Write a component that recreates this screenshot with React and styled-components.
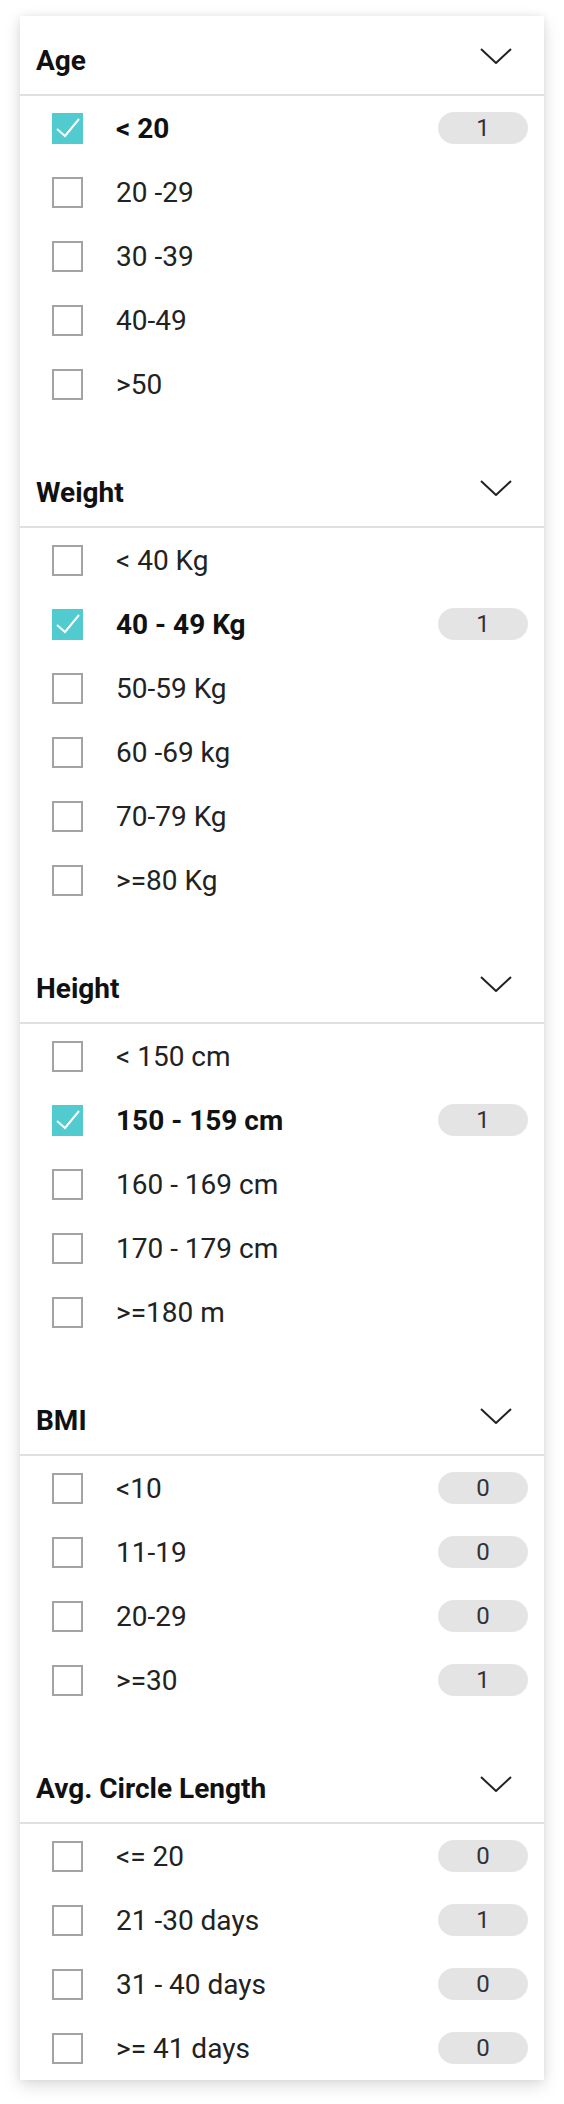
import React from 'react';
import styled, { createGlobalStyle } from 'styled-components';

const filters = [
  {
    title: 'Age',
    options: [
      { label: '< 20', checked: true, count: 1 },
      { label: '20 -29' },
      { label: '30 -39' },
      { label: '40-49' },
      { label: '>50' },
    ],
  },
  {
    title: 'Weight',
    options: [
      { label: '< 40 Kg' },
      { label: '40 - 49 Kg', checked: true, count: 1 },
      { label: '50-59 Kg' },
      { label: '60 -69 kg' },
      { label: '70-79 Kg' },
      { label: '>=80 Kg' },
    ],
  },
  {
    title: 'Height',
    options: [
      { label: '< 150 cm' },
      { label: '150 - 159 cm', checked: true, count: 1 },
      { label: '160 - 169 cm' },
      { label: '170 - 179 cm' },
      { label: '>=180 m' },
    ],
  },
  {
    title: 'BMI',
    options: [
      { label: '<10', count: 0 },
      { label: '11-19', count: 0 },
      { label: '20-29', count: 0 },
      { label: '>=30', count: 1 },
    ],
  },
  {
    title: 'Avg. Circle Length',
    options: [
      { label: '<= 20', count: 0 },
      { label: '21 -30 days', count: 1 },
      { label: '31 - 40 days', count: 0 },
      { label: '>= 41 days', count: 0 },
    ],
  },
];

const App = () => {
  return (
    <>
      <GlobalStyle />
      <Page>
        <Card>
          {filters.map(group => (
            <Section key={group.title}>
              <SectionHeader>
                <Title>{group.title}</Title>
                <Chevron viewBox="0 0 32 16">
                  <polyline points="1,1 16,15 31,1" />
                </Chevron>
              </SectionHeader>
              {group.options.map(opt => (
                <Row key={opt.label}>
                  <Box checked={opt.checked}>
                    {opt.checked && (
                      <svg viewBox="0 0 31 31" width="31" height="31">
                        <polyline points="5,16 13,23 27,6" />
                      </svg>
                    )}
                  </Box>
                  <Label checked={opt.checked}>{opt.label}</Label>
                  {opt.count !== undefined && <Badge>{opt.count}</Badge>}
                </Row>
              ))}
            </Section>
          ))}
        </Card>
      </Page>
    </>
  );
};

export default App;

const GlobalStyle = createGlobalStyle`
  body {
    margin: 0;
    background: #fff;
    font-family: Roboto, "Liberation Sans", sans-serif;
  }
`;

const Page = styled.div`
  padding: 16px 20px 24px;
`;

const Card = styled.div`
  background: #fff;
  display: flex;
  flex-direction: column;
  gap: 32px;
  box-shadow: 0 6px 16px rgba(0, 0, 0, 0.13), 0 0 8px rgba(0, 0, 0, 0.07);
`;

const Section = styled.div`
  display: flex;
  flex-direction: column;
`;

const SectionHeader = styled.div`
  display: flex;
  justify-content: space-between;
  align-items: flex-start;
  height: 48px;
  padding: 30px 32px 0 16px;
  border-bottom: 2px solid #e0e0e0;
`;

const Title = styled.div`
  font-size: 28px;
  line-height: 30px;
  font-weight: 700;
  color: #111;
`;

const Chevron = styled.svg`
  width: 32px;
  height: 16px;
  margin-top: 2px;
  fill: none;
  stroke: #222;
  stroke-width: 2;
`;

const Row = styled.div`
  height: 64px;
  display: flex;
  align-items: center;
  padding: 0 16px 0 32px;
`;

const Box = styled.div`
  width: 31px;
  height: 31px;
  box-sizing: border-box;
  flex-shrink: 0;
  border: ${({ checked }) => (checked ? 'none' : '2px solid #a3a3a3')};
  background: ${({ checked }) => (checked ? '#52cbd0' : '#fff')};

  svg {
    display: block;
    fill: none;
    stroke: #fff;
    stroke-width: 2;
  }
`;

const Label = styled.div`
  flex: 1;
  margin-left: 33px;
  font-size: 28px;
  font-weight: ${({ checked }) => (checked ? 700 : 400)};
  color: ${({ checked }) => (checked ? '#111' : '#222')};
`;

const Badge = styled.div`
  width: 90px;
  height: 32px;
  border-radius: 16px;
  background: #e4e4e4;
  color: #333;
  font-size: 24px;
  display: flex;
  align-items: center;
  justify-content: center;
`;
